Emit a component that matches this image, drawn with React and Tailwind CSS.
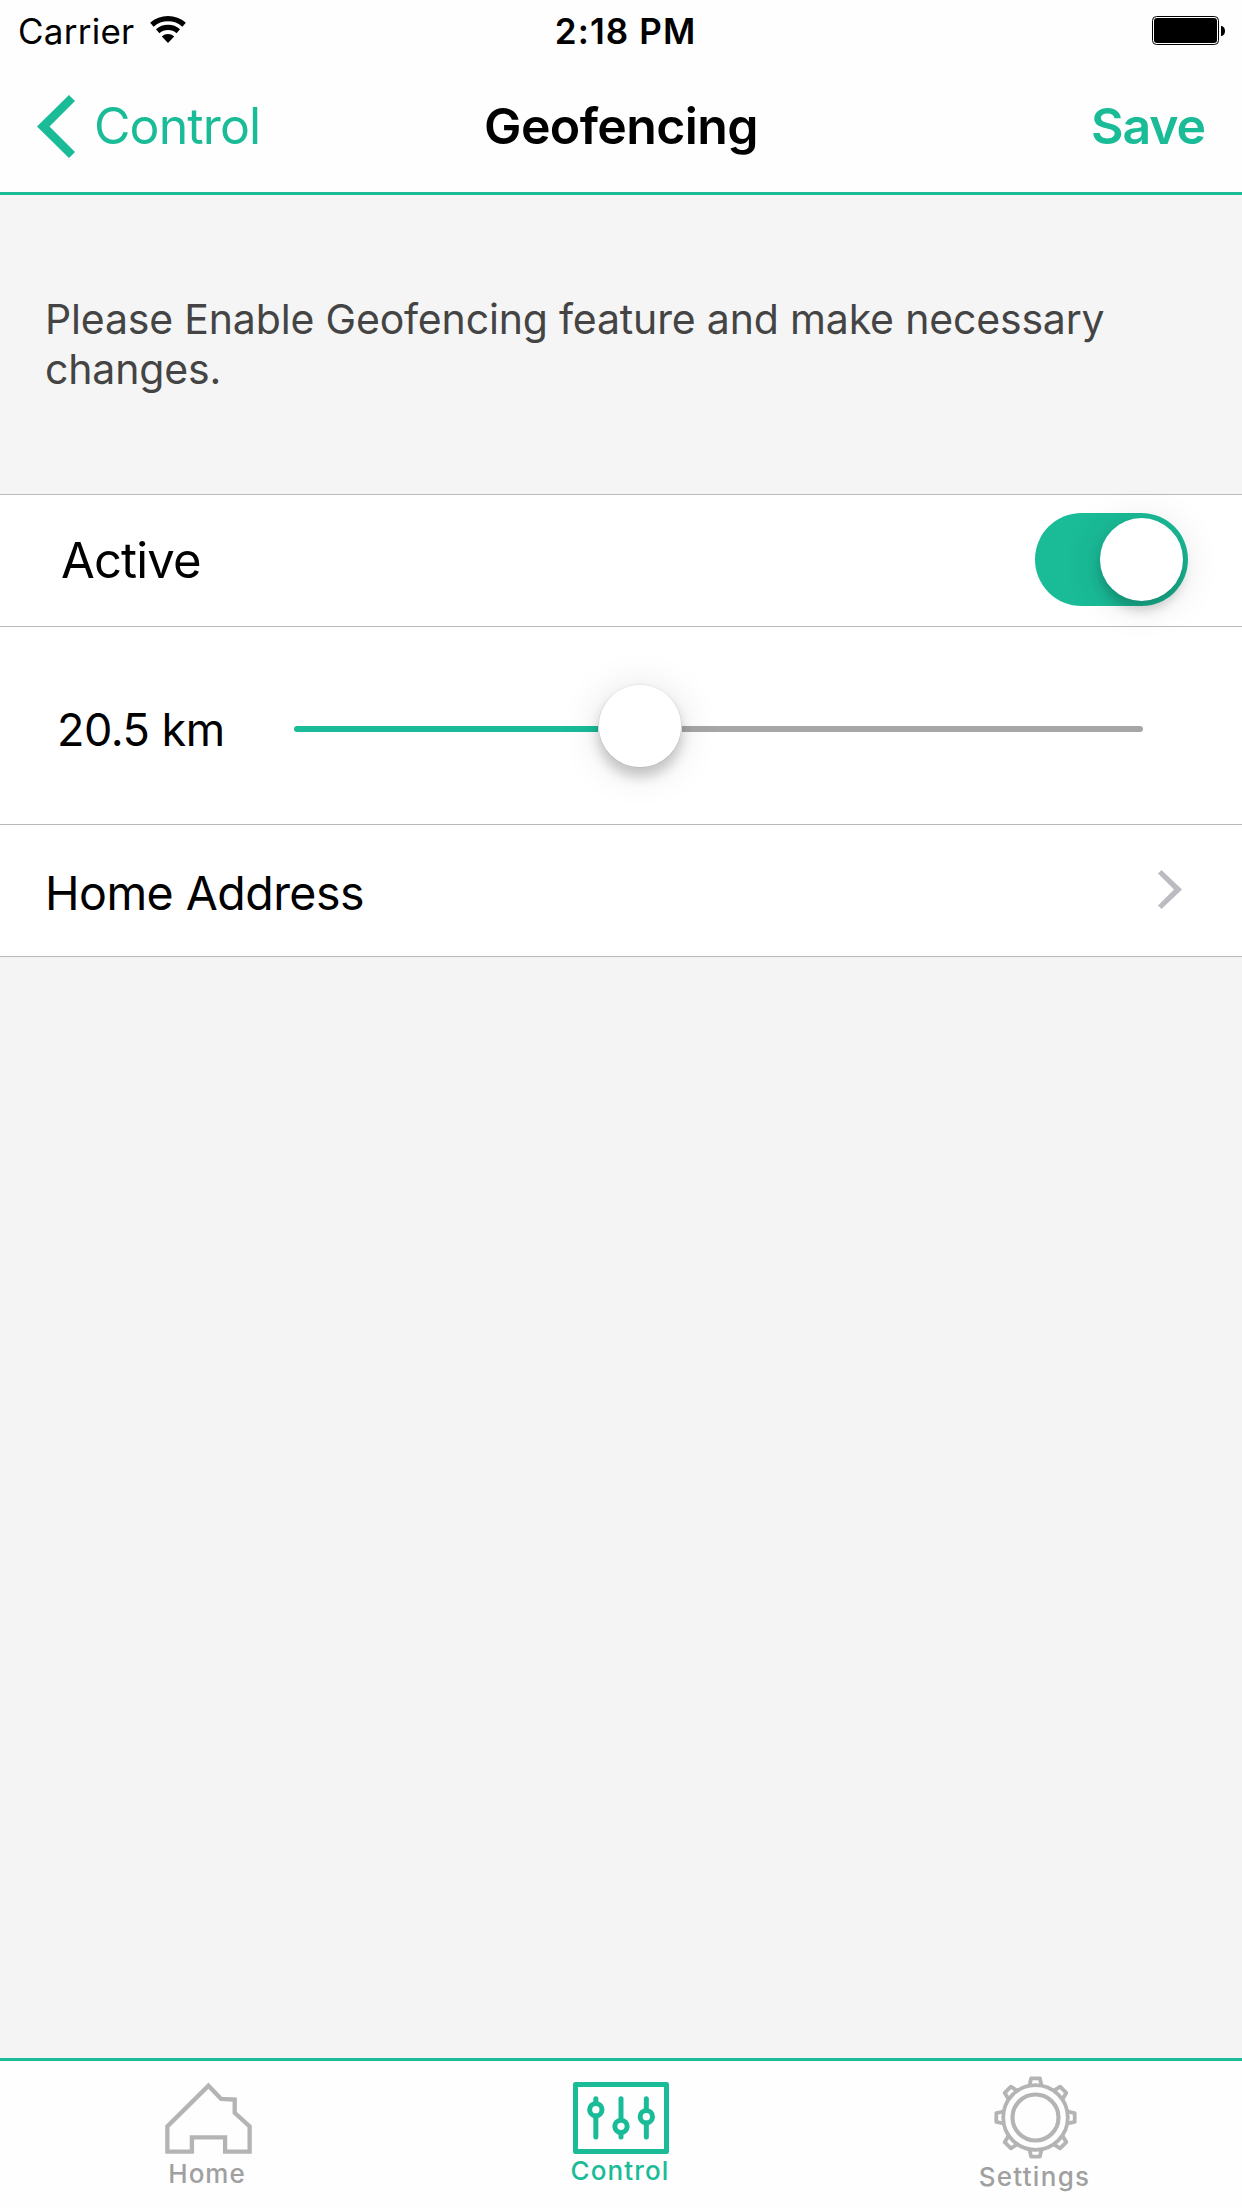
import { useState } from "react";

const MAX_KM = 50;

function WifiIcon() {
  return (
    <svg className="mt-1.5 ml-[15px] h-[27px] w-[38px]" viewBox="0 0 38 27" fill="none" stroke="#000">
      <path d="M2.9 8.7A24.4 24.4 0 0 1 35.1 8.7" strokeWidth="5.2" />
      <path d="M8.7 15.2A15.7 15.7 0 0 1 29.3 15.2" strokeWidth="5.2" />
      <path d="M19 27L12.8 20.5A9 9 0 0 1 25.2 20.5Z" fill="#000" stroke="none" />
    </svg>
  );
}

function BatteryIcon() {
  return (
    <svg className="mt-1.5 h-[29px] w-[73px]" viewBox="0 0 73 29">
      <rect x="0.5" y="0.5" width="66" height="28" rx="4" fill="none" stroke="#000" />
      <rect x="2" y="2" width="63" height="25" rx="3" />
      <path d="M69 10C74.3 10 74.3 20 69 20Z" />
    </svg>
  );
}

function StatusBar() {
  return (
    <div className="grid h-[60px] grid-cols-3 pt-2.5 text-[35px] leading-[42px]">
      <div className="flex items-start pl-[18px]">
        <span className="tracking-[0.25px]">Carrier</span>
        <WifiIcon />
      </div>
      <div className="pl-[9px] text-center font-semibold tracking-[1.1px]">2:18 PM</div>
      <div className="flex justify-end pr-[17px]">
        <BatteryIcon />
      </div>
    </div>
  );
}

function NavBar() {
  return (
    <header className="grid h-[135px] grid-cols-3 items-start border-b-[3px] border-[#1abb97] pt-[35px] text-[50px] leading-[60px]">
      <button className="flex items-start pl-[37px] text-[#1abb97]">
        <svg className="h-[63px] w-[38px]" viewBox="0 0 38 63" fill="currentColor">
          <path d="M0 31.5L32 0L38 6L12.5 31.5L38 57L32 63Z" />
        </svg>
        <span className="mt-px ml-[19px] tracking-[-0.9px]">Control</span>
      </button>
      <h1 className="mt-px text-center font-semibold tracking-[-0.6px]">Geofencing</h1>
      <button className="mt-px pr-[37px] text-right font-semibold tracking-[-1.1px] text-[#1abb97]">
        Save
      </button>
    </header>
  );
}

function Toggle({ checked, onChange }) {
  return (
    <button
      role="switch"
      aria-checked={checked}
      onClick={() => onChange(!checked)}
      className={`mb-0.5 flex h-[93px] w-[153px] items-center rounded-full px-[5px] ${
        checked ? "justify-end bg-[#1abb97]" : "justify-start bg-[#e5e5e5]"
      }`}
    >
      <span className="size-[83px] rounded-full bg-white shadow-[0_9px_12px_rgba(0,0,0,0.18),0_4px_40px_rgba(0,0,0,0.12)]" />
    </button>
  );
}

function Slider({ value }) {
  // the thumb stays inside the track, so its travel is the track minus its width
  const ratio = value / MAX_KM - 0.013;
  return (
    <div className="flex h-[84px] w-[849px] items-center">
      <div
        className="mt-[7px] h-1.5 rounded-l-full bg-[#1abb97]"
        style={{ width: `${(849 - 84) * ratio}px` }}
      />
      <div className="z-10 size-[84px] shrink-0 rounded-full border border-black/5 bg-white bg-clip-padding shadow-[0_9px_12px_rgba(0,0,0,0.18),0_4px_40px_rgba(0,0,0,0.12)]" />
      <div className="mt-[7px] h-1.5 flex-1 rounded-r-full bg-[#a6a6a6]" />
    </div>
  );
}

function HomeIcon() {
  return (
    <svg className="ml-0.5 h-[72px] w-[87px]" viewBox="105 126 260 217" fill="none" stroke="#b4b4b4" strokeWidth="13">
      <path d="M235 137L273 177L314 179V219L359 260V336H285V293H185V336H111V260Z" />
    </svg>
  );
}

function ControlIcon() {
  return (
    <svg
      className="h-[72px] w-[96px]"
      viewBox="99 126 288 216"
      fill="none"
      stroke="#1abb97"
      strokeWidth="15"
      strokeLinecap="round"
      strokeLinejoin="round"
    >
      <rect x="106.5" y="133.5" width="273" height="201" />
      <path d="M167.5 176V184M167.5 233V291M243 176V234M243 285V291M319 176V205M319 255V291" />
      <circle cx="167.5" cy="209" r="18.5" />
      <circle cx="243" cy="259" r="18.5" />
      <circle cx="319" cy="230" r="18.5" />
    </svg>
  );
}

function GearIcon() {
  return (
    <svg
      className="h-[83px] w-[83px]"
      viewBox="-41.5 -41.5 83 83"
      fill="none"
      stroke="#b4b4b4"
      strokeWidth="3.8"
      strokeLinejoin="round"
    >
      <circle r="32.3" />
      <circle r="23" strokeWidth="4.2" />
      {[0, 45, 90, 135, 180, 225, 270, 315].map((deg) => (
        <path key={deg} d="M-6 -32L-4.4 -39.2H4.4L6 -32" transform={`rotate(${deg})`} />
      ))}
    </svg>
  );
}

function TabBar() {
  return (
    <nav className="grid h-[150px] grid-cols-3 border-t-[3px] border-[#1abb97] bg-[#fefefe] text-[26px] leading-[31px] font-medium text-[#a0a0a0]">
      <button className="flex flex-col items-center pt-[21px]">
        <HomeIcon />
        <span className="mt-1 tracking-[1px]">Home</span>
      </button>
      <button className="flex flex-col items-center pt-[21px] text-[#1abb97]">
        <ControlIcon />
        <span className="mt-px mr-0.5 tracking-[1.15px]">Control</span>
      </button>
      <button className="flex flex-col items-center pt-[15px]">
        <GearIcon />
        <span className="mt-0.5 mr-px tracking-[1.3px]">Settings</span>
      </button>
    </nav>
  );
}

export default function App() {
  const [active, setActive] = useState(true);
  const [distance] = useState(20.5);

  return (
    <div className="flex h-[2208px] w-[1242px] flex-col bg-[#f4f4f4] font-['Inter',sans-serif] text-black">
      <div className="bg-[#fefefe]">
        <StatusBar />
        <NavBar />
      </div>

      <p className="h-[299px] bg-[#f5f5f5] pt-[99px] pr-10 pl-[45px] text-[41px] leading-[50px] tracking-[-0.17px] text-[#444]">
        Please Enable Geofencing feature and make necessary changes.
      </p>

      <div className="border-y border-[#bab9bf] bg-white">
        <div className="flex h-[131px] items-center justify-between pr-[54px] pl-[61px]">
          <span className="text-[49px] leading-[60px] tracking-[-0.85px]">Active</span>
          <Toggle checked={active} onChange={setActive} />
        </div>

        <div className="flex h-[199px] items-center border-y border-[#bab9bf] pl-[57px]">
          <span className="w-[237px] pt-2 text-[45px] leading-[56px] tracking-[-0.5px]">
            {distance} km
          </span>
          <Slider value={distance} />
        </div>

        <div className="flex h-[131px] items-center justify-between pr-[60px] pl-[45px]">
          <span className="pt-1 text-[46.5px] leading-[56px] tracking-[-0.53px]">Home Address</span>
          <svg className="mb-0.5 h-[39px] w-6" viewBox="0 0 24 39" fill="#bcbbc1">
            <path d="M0 3.5L3.5 0L24 19.5L3.5 39L0 35.5L16 19.5Z" />
          </svg>
        </div>
      </div>

      <div className="flex-1" />
      <TabBar />
    </div>
  );
}
